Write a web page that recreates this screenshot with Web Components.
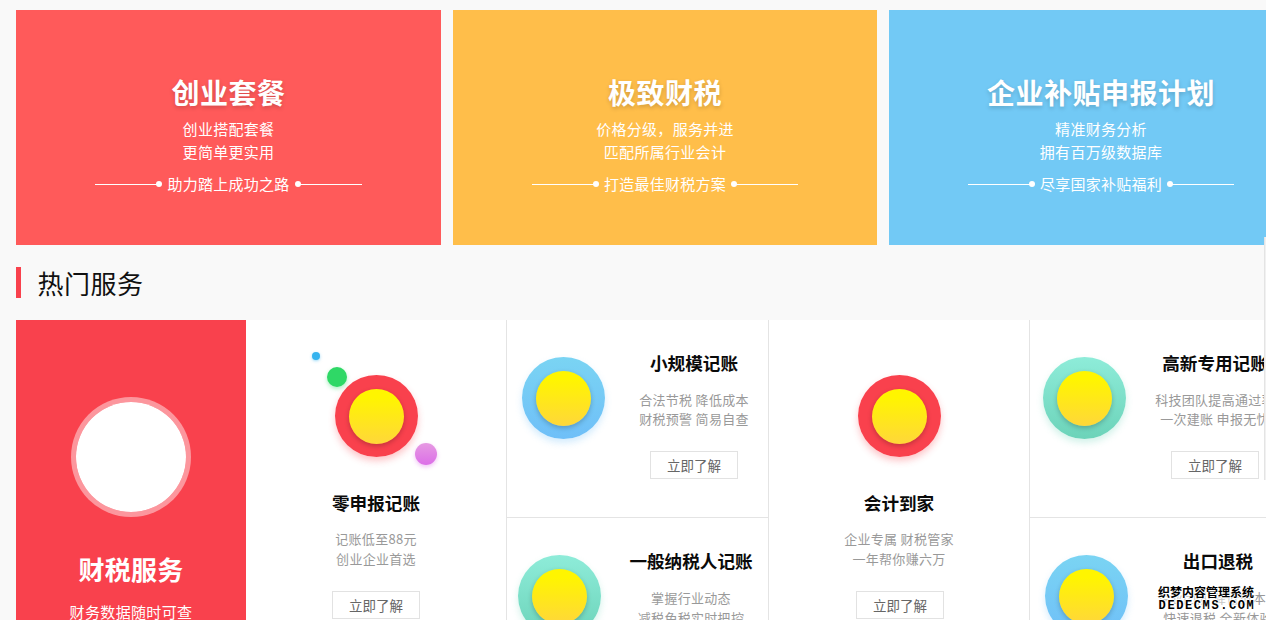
<!DOCTYPE html>
<html lang="zh">
<head>
<meta charset="utf-8">
<title>热门服务</title>
<style>
  html, body { margin: 0; height: 620px; overflow: hidden; background: #f9f9f9; }
  body { font-family: "Noto Sans CJK SC", "Noto Sans", sans-serif; position: relative; }
  .page { width: 1400px; padding: 10px 0 0 16px; box-sizing: border-box; }
</style>
</head>
<body>
<div class="page">
  <promo-row>
    <promo-card title-text="创业套餐" tag="助力踏上成功之路" color="#ff5a5a">创业搭配套餐<br>更简单更实用</promo-card>
    <promo-card title-text="极致财税" tag="打造最佳财税方案" color="#ffbe4a">价格分级，服务并进<br>匹配所属行业会计</promo-card>
    <promo-card title-text="企业补贴申报计划" tag="尽享国家补贴福利" color="#72c9f5">精准财务分析<br>拥有百万级数据库</promo-card>
  </promo-row>
  <section-title>热门服务</section-title>
  <service-grid>
    <service-intro title-text="财税服务">财务数据随时可查</service-intro>
    <service-tall title-text="零申报记账" planets>记账低至88元<br>创业企业首选</service-tall>
    <service-stack>
      <service-cell title-text="小规模记账" tone="blue" orb-left="15" text-left="122">合法节税 降低成本<br>财税预警 简易自查</service-cell>
      <service-cell title-text="一般纳税人记账" tone="teal" orb-left="11" text-left="119">掌握行业动态<br>减税免税实时把控</service-cell>
    </service-stack>
    <service-tall title-text="会计到家" style="--btn-nudge: 2px">企业专属 财税管家<br>一年帮你赚六万</service-tall>
    <service-stack>
      <service-cell title-text="高新专用记账" tone="teal" orb-left="13" text-left="120">科技团队提高通过率<br>一次建账 申报无忧</service-cell>
      <service-cell title-text="出口退税" tone="blue" orb-left="15" text-left="123">专业团队 降低成本费<br>快速退税 全新体验</service-cell>
    </service-stack>
  </service-grid>
</div>
<edge-line></edge-line>
<stamp-mark></stamp-mark>

<script>
class PromoRow extends HTMLElement {
  connectedCallback() {
    this.attachShadow({ mode: 'open' });
    this.shadowRoot.innerHTML = `
      <style>
        :host { display: grid; grid-template-columns: 425px 424px 424px; gap: 12px; }
      </style>
      <slot></slot>
    `;
  }
}

class PromoCard extends HTMLElement {
  connectedCallback() {
    this.attachShadow({ mode: 'open' });
    this.shadowRoot.innerHTML = `
      <style>
        :host {
          display: block;
          height: 235px;
          box-sizing: border-box;
          padding-top: 62px;
          background: ${this.getAttribute('color')};
          color: #fff;
          text-align: center;
        }
        h2 {
          margin: 0;
          font-size: 28px;
          line-height: 40px;
          font-weight: 700;
          letter-spacing: .5px;
          text-shadow: 0 2px 4px rgba(0, 0, 0, .18);
        }
        .sub {
          margin-top: 5px;
          font-size: 15px;
          line-height: 23px;
          letter-spacing: .3px;
        }
        .tag {
          margin-top: 11px;
          display: flex;
          justify-content: center;
          align-items: center;
          font-size: 15px;
          line-height: 20px;
          letter-spacing: .25px;
        }
        .tag span { margin: 0 6px; }
        .rule { display: flex; align-items: center; }
        .rule i { display: block; width: 62px; height: 1px; background: #fff; }
        .rule b { display: block; width: 6px; height: 6px; border-radius: 50%; background: #fff; margin: 0 -1px; }
      </style>
      <h2>${this.getAttribute('title-text')}</h2>
      <div class="sub"><slot></slot></div>
      <div class="tag">
        <div class="rule"><i></i><b></b></div>
        <span>${this.getAttribute('tag')}</span>
        <div class="rule"><b></b><i></i></div>
      </div>
    `;
  }
}

class SectionTitle extends HTMLElement {
  connectedCallback() {
    this.attachShadow({ mode: 'open' });
    this.shadowRoot.innerHTML = `
      <style>
        :host {
          display: block;
          margin: 22px 0 22px;
          padding-left: 16.5px;
          border-left: 5px solid #f9414d;
          height: 31px;
          font-size: 26px;
          line-height: 31px;
          letter-spacing: .5px;
          color: #111;
        }
      </style>
      <slot></slot>
    `;
  }
}

class ServiceGrid extends HTMLElement {
  connectedCallback() {
    this.attachShadow({ mode: 'open' });
    this.shadowRoot.innerHTML = `
      <style>
        :host {
          display: grid;
          grid-template-columns: 230px 261px 262px 261px 262px;
          height: 396px;
          background: #fff;
          width: 1276px;
        }
      </style>
      <slot></slot>
    `;
  }
}

class ServiceIntro extends HTMLElement {
  connectedCallback() {
    this.attachShadow({ mode: 'open' });
    this.shadowRoot.innerHTML = `
      <style>
        :host {
          display: flex;
          flex-direction: column;
          align-items: center;
          box-sizing: border-box;
          padding-top: 77px;
          background: #f9414d;
          color: #fff;
        }
        .disc {
          width: 110px;
          height: 110px;
          margin-right: 1px;
          border-radius: 50%;
          background: #fff;
          border: 5px solid rgba(255, 255, 255, .45);
          background-clip: padding-box;
        }
        h3 {
          margin: 32px 0 0;
          font-size: 26px;
          line-height: 40px;
          font-weight: 700;
          letter-spacing: .3px;
        }
        p {
          margin: 13px 0 0;
          font-size: 15px;
          line-height: 20px;
          letter-spacing: .35px;
        }
      </style>
      <div class="disc"></div>
      <h3>${this.getAttribute('title-text')}</h3>
      <p><slot></slot></p>
    `;
  }
}

class OrbIcon extends HTMLElement {
  connectedCallback() {
    const tones = {
      red: ['#f9414d', '#f9414d', 'rgba(249, 65, 77, .3)'],
      blue: ['#7ad4f3', '#6fbff8', 'rgba(111, 191, 248, .3)'],
      teal: ['#8eecd9', '#6cd3b9', 'rgba(108, 211, 185, .3)']
    };
    const t = tones[this.getAttribute('tone') || 'red'];
    const planets = this.hasAttribute('planets') ? `
      <u style="left:-23px;top:-23px;width:8px;height:8px;background:#35b3ee;box-shadow:0 1px 3px rgba(53,179,238,.5)"></u>
      <u style="left:-8px;top:-8px;width:20px;height:20px;background:#2fd866;box-shadow:0 2px 4px rgba(47,216,102,.4)"></u>
      <u style="left:80px;top:68px;width:22px;height:22px;background:linear-gradient(#e69ae2,#dc6ee8);box-shadow:0 2px 4px rgba(220,110,232,.4)"></u>
    ` : '';
    this.attachShadow({ mode: 'open' });
    this.shadowRoot.innerHTML = `
      <style>
        :host {
          display: flex;
          position: relative;
          flex: none;
          align-items: center;
          justify-content: center;
          width: 83px;
          height: 82px;
          border-radius: 50%;
          background: linear-gradient(${t[0]}, ${t[1]});
          box-shadow: 0 4px 7px ${t[2]};
        }
        .sun {
          width: 55px;
          height: 55px;
          border-radius: 50%;
          background: linear-gradient(#fff500 15%, #ffd73a);
          box-shadow: 0 2px 5px rgba(0, 0, 0, .22);
        }
        u { position: absolute; display: block; border-radius: 50%; }
      </style>
      <div class="sun"></div>
      ${planets}
    `;
  }
}

const textStyles = `
  h4 {
    margin: 0;
    font-size: 17.6px;
    line-height: 24px;
    font-weight: 700;
    color: #0a0a0a;
    white-space: nowrap;
  }
  p {
    margin: 14px 0 0;
    font-size: 13px;
    line-height: 20px;
    letter-spacing: .3px;
    color: #999;
    white-space: nowrap;
  }
  a {
    display: block;
    box-sizing: border-box;
    width: 88px;
    height: 28px;
    margin: 21px 0 0 var(--btn-nudge, 0);
    border: 1px solid #e2e2e2;
    font-size: 13.5px;
    line-height: 26px;
    color: #666;
    text-align: center;
    text-decoration: none;
    background: #fff;
  }
`;

class ServiceTall extends HTMLElement {
  connectedCallback() {
    const planets = this.hasAttribute('planets') ? 'planets' : '';
    this.attachShadow({ mode: 'open' });
    this.shadowRoot.innerHTML = `
      <style>
        ${textStyles}
        :host {
          display: flex;
          flex-direction: column;
          align-items: center;
          box-sizing: border-box;
          padding-top: 55px;
          border-right: 1px solid #e4e4e4;
          text-align: center;
        }
        h4 { margin-top: 34px; }
        a { margin-top: 22px; }
      </style>
      <orb-icon ${planets}></orb-icon>
      <h4>${this.getAttribute('title-text')}</h4>
      <p><slot></slot></p>
      <a href="#">立即了解</a>
    `;
  }
}

class ServiceStack extends HTMLElement {
  connectedCallback() {
    this.attachShadow({ mode: 'open' });
    this.shadowRoot.innerHTML = `
      <style>
        :host {
          display: grid;
          grid-template-rows: 198px 198px;
          border-right: 1px solid #e4e4e4;
          min-width: 0;
        }
      </style>
      <slot></slot>
    `;
  }
}

class ServiceCell extends HTMLElement {
  connectedCallback() {
    const orbLeft = this.getAttribute('orb-left');
    const textLeft = this.getAttribute('text-left');
    this.attachShadow({ mode: 'open' });
    this.shadowRoot.innerHTML = `
      <style>
        ${textStyles}
        :host {
          display: flex;
          box-sizing: border-box;
          border-bottom: 1px solid #e4e4e4;
          min-width: 0;
          --desc-lh: 19px;
          --btn-top: 23px;
        }
        :host(:last-child) {
          border-bottom: 0;
          --desc-lh: 20px;
          --btn-top: 21px;
        }
        orb-icon { margin: 37px 0 0 ${orbLeft}px; }
        .text {
          margin-left: ${textLeft - orbLeft - 83}px;
          padding-top: 31px;
          width: 130px;
          display: flex;
          flex-direction: column;
          align-items: center;
          text-align: center;
        }
        p { margin-top: 15px; line-height: var(--desc-lh); }
        a { margin-top: var(--btn-top); }
      </style>
      <orb-icon tone="${this.getAttribute('tone')}"></orb-icon>
      <div class="text">
        <h4>${this.getAttribute('title-text')}</h4>
        <p><slot></slot></p>
        <a href="#">立即了解</a>
      </div>
    `;
  }
}

// thin line that sits on the right edge of the window
class EdgeLine extends HTMLElement {
  connectedCallback() {
    this.attachShadow({ mode: 'open' });
    this.shadowRoot.innerHTML = `
      <style>
        :host {
          position: absolute;
          left: 1264px;
          top: 237px;
          width: 2px;
          height: 243px;
          background: #f1f1f1;
          border-left: 1px solid #e4e4e4;
          box-sizing: border-box;
        }
      </style>
    `;
  }
}

class StampMark extends HTMLElement {
  connectedCallback() {
    this.attachShadow({ mode: 'open' });
    this.shadowRoot.innerHTML = `
      <style>
        :host {
          position: absolute;
          left: 1156px;
          top: 585px;
          width: 100px;
          color: #000;
          text-align: center;
          background: rgba(255, 255, 255, .45);
          text-shadow: 1px 0 0 #fff, -1px 0 0 #fff, 0 1px 0 #fff, 0 -1px 0 #fff;
        }
        div { white-space: nowrap; }
        .cn { font-size: 12px; line-height: 13px; font-weight: 700; }
        .en { font: 700 12px/14px "Liberation Mono", monospace; letter-spacing: 1.6px; margin: 1px -2px 0 0; }
      </style>
      <div class="cn">织梦内容管理系统</div>
      <div class="en">DEDECMS.COM</div>
    `;
  }
}

customElements.define('promo-row', PromoRow);
customElements.define('promo-card', PromoCard);
customElements.define('section-title', SectionTitle);
customElements.define('service-grid', ServiceGrid);
customElements.define('service-intro', ServiceIntro);
customElements.define('orb-icon', OrbIcon);
customElements.define('service-tall', ServiceTall);
customElements.define('service-stack', ServiceStack);
customElements.define('service-cell', ServiceCell);
customElements.define('edge-line', EdgeLine);
customElements.define('stamp-mark', StampMark);
</script>
</body>
</html>
